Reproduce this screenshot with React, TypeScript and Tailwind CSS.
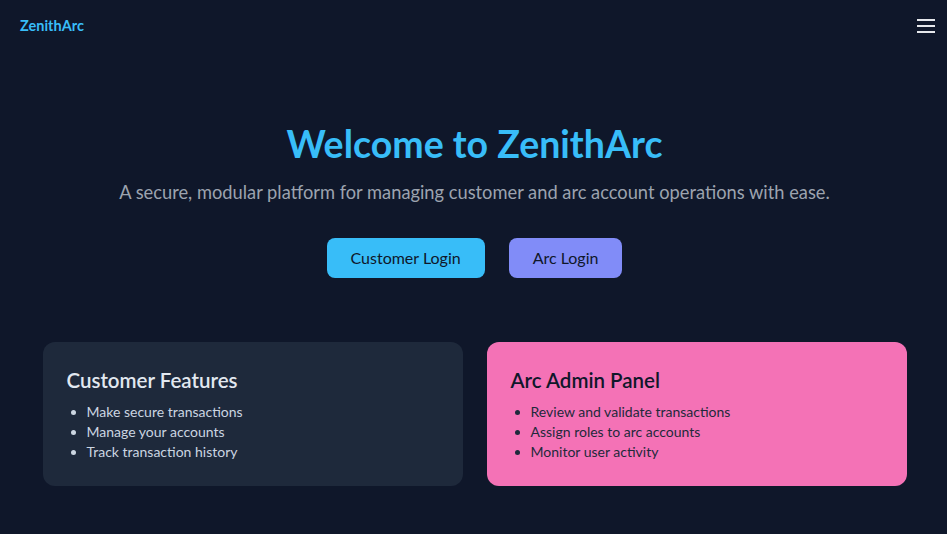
import React from "react";

export default function App() {
  return (
    <div className="min-h-[534px] bg-[#0f172a] text-[#e5e7eb]" style={{ fontFamily: 'Lato, sans-serif' }}>
      <nav className="flex h-[51px] items-center justify-between pl-5 pr-3">
        <span className="text-[14.5px] font-bold text-[#38bdf8]">ZenithArc</span>
        <button className="flex h-6 items-center justify-center" aria-label="menu">
          <svg width="18" height="14" viewBox="0 0 18 14" fill="#e5e7eb">
            <rect x="0" y="0" width="18" height="2" />
            <rect x="0" y="6" width="18" height="2" />
            <rect x="0" y="12" width="18" height="2" />
          </svg>
        </button>
      </nav>
      <div className="pl-[2px]">
        <section className="flex flex-col items-center pt-[73px] text-center">
          <h1 className="text-[37.5px] leading-10 font-bold text-[#38bdf8]">Welcome to ZenithArc</h1>
          <p className="mt-[14px] text-[18.3px] leading-7 text-[#9ca3af]">
            A secure, modular platform for managing customer and arc account operations with ease.
          </p>
          <div className="mt-[32px] flex gap-6">
            <button className="rounded-lg bg-[#38bdf8] px-6 py-2 text-base text-[#0f172a]">Customer Login</button>
            <button className="rounded-lg bg-[#818cf8] px-6 py-2 text-base text-[#0f172a]">Arc Login</button>
          </div>
        </section>
        <section className="mx-auto mt-[64px] grid w-[864px] grid-cols-2 gap-6">
          <div className="rounded-xl bg-[#1e293b] p-6">
            <h2 className="mb-2 text-[20.5px] leading-7 font-semibold text-[#e2e8f0]">Customer Features</h2>
            <ul className="list-disc pl-5 text-sm text-[#cbd5e1]">
              <li>Make secure transactions</li>
              <li>Manage your accounts</li>
              <li>Track transaction history</li>
            </ul>
          </div>
          <div className="rounded-xl bg-[#f472b6] p-6">
            <h2 className="mb-2 text-[20.5px] leading-7 font-semibold text-[#0f172a]">Arc Admin Panel</h2>
            <ul className="list-disc pl-5 text-sm text-[#1e293b]">
              <li>Review and validate transactions</li>
              <li>Assign roles to arc accounts</li>
              <li>Monitor user activity</li>
            </ul>
          </div>
        </section>
      </div>
    </div>
  );
}
